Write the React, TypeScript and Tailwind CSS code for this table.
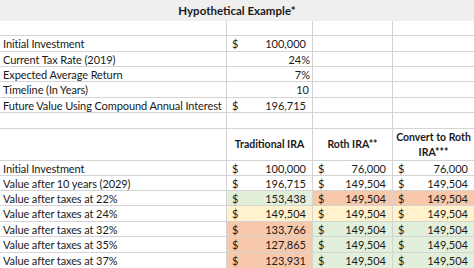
import React from "react";

const G = "bg-[#e2efda]";
const Y = "bg-[#fff2cc]";
const O = "bg-[#f8c8aa]";
const W = "bg-white";

type Cell = { v: string; dollar?: boolean; bg?: string; pr?: string };

const topRows: { label: string; b?: Cell }[] = [
  { label: "" },
  { label: "Initial Investment", b: { v: "100,000", dollar: true } },
  { label: "Current Tax Rate (2019)", b: { v: "24%", pr: "pr-[2px]" } },
  { label: "Expected Average Return", b: { v: "7%", pr: "pr-[2px]" } },
  { label: "Timeline (In Years)", b: { v: "10", pr: "pr-[3px]" } },
  { label: "Future Value Using Compound Annual Interest", b: { v: "196,715", dollar: true } },
  { label: "" },
];
const topH = ["h-[15px]", "h-[16px]", "h-[15px]", "h-[15px]", "h-[16px]", "h-[15px]", "h-[16px]"];

const bottomRows: { label: string; cells: Cell[] }[] = [
  { label: "Initial Investment", cells: [{ v: "100,000", dollar: true, bg: W }, { v: "76,000", dollar: true, bg: W }, { v: "76,000", dollar: true, bg: W }] },
  { label: "Value after 10 years (2029)", cells: [{ v: "196,715", dollar: true, bg: W }, { v: "149,504", dollar: true, bg: W }, { v: "149,504", dollar: true, bg: W }] },
  { label: "Value after taxes at 22%", cells: [{ v: "153,438", dollar: true, bg: G }, { v: "149,504", dollar: true, bg: O }, { v: "149,504", dollar: true, bg: O }] },
  { label: "Value after taxes at 24%", cells: [{ v: "149,504", dollar: true, bg: Y }, { v: "149,504", dollar: true, bg: Y }, { v: "149,504", dollar: true, bg: Y }] },
  { label: "Value after taxes at 32%", cells: [{ v: "133,766", dollar: true, bg: O }, { v: "149,504", dollar: true, bg: G }, { v: "149,504", dollar: true, bg: G }] },
  { label: "Value after taxes at 35%", cells: [{ v: "127,865", dollar: true, bg: O }, { v: "149,504", dollar: true, bg: G }, { v: "149,504", dollar: true, bg: G }] },
  { label: "Value after taxes at 37%", cells: [{ v: "123,931", dollar: true, bg: O }, { v: "149,504", dollar: true, bg: G }, { v: "149,504", dollar: true, bg: G }] },
];
const botH = ["h-[15px]", "h-[15px]", "h-[15px]", "h-[16px]", "h-[15px]", "h-[16px]", "h-[15px]"];

function ValueCell({ c, w, last }: { c?: Cell; w: string; last?: boolean }) {
  return (
    <div
      className={`${w} shrink-0 h-full flex items-center justify-between whitespace-nowrap ${last ? "" : "border-r border-[#d4d4d4]"} ${c?.bg ?? ""} ${c?.pr ?? "pr-[6px]"} pl-[5px]`}
    >
      <span>{c?.dollar ? "$" : ""}</span>
      <span>{c?.v ?? ""}</span>
    </div>
  );
}

export default function App() {
  return (
    <div
      className="w-[474px] h-[268px] overflow-hidden bg-white text-[#1a1a1a] text-[11px] leading-none"
      style={{ fontFamily: "Lato, 'Open Sans', sans-serif" }}
    >
      <div className="h-[21px] bg-[#efefef] flex items-center justify-center font-bold text-[11.5px] whitespace-nowrap">
        Hypothetical Example*
      </div>
      {topRows.map((r, i) => (
        <div key={i} className={`${topH[i]} flex border-b border-[#d4d4d4]`}>
          <div className="w-[227px] shrink-0 h-full flex items-center pl-[3px] border-r border-[#d4d4d4] whitespace-nowrap tracking-[-0.1px]">
            {r.label}
          </div>
          <ValueCell c={r.b} w="w-[86px]" />
          <ValueCell w="w-[80px]" />
          <ValueCell w="w-[81px]" last />
        </div>
      ))}
      <div className="h-[32px] flex border-b border-[#d4d4d4] font-bold text-[10.5px] whitespace-nowrap">
        <div className="w-[227px] shrink-0 h-full border-r border-[#d4d4d4]" />
        <div className="w-[86px] shrink-0 h-full flex items-center justify-center border-r border-[#d4d4d4]">
          Traditional IRA
        </div>
        <div className="w-[80px] shrink-0 h-full flex items-center justify-center border-r border-[#d4d4d4]">
          Roth IRA**
        </div>
        <div className="w-[81px] shrink-0 h-full flex flex-col items-center justify-center gap-[4px]">
          <span>Convert to Roth</span>
          <span>IRA***</span>
        </div>
      </div>
      {bottomRows.map((r, i) => (
        <div key={i} className={`${botH[i]} flex ${i < bottomRows.length - 1 ? "border-b border-[#d4d4d4]" : ""}`}>
          <div className="w-[227px] shrink-0 h-full flex items-center pl-[3px] border-r border-[#d4d4d4] whitespace-nowrap tracking-[-0.1px]">
            {r.label}
          </div>
          <ValueCell c={r.cells[0]} w="w-[86px]" />
          <ValueCell c={r.cells[1]} w="w-[80px]" />
          <ValueCell c={r.cells[2]} w="w-[81px]" last />
        </div>
      ))}
    </div>
  );
}
